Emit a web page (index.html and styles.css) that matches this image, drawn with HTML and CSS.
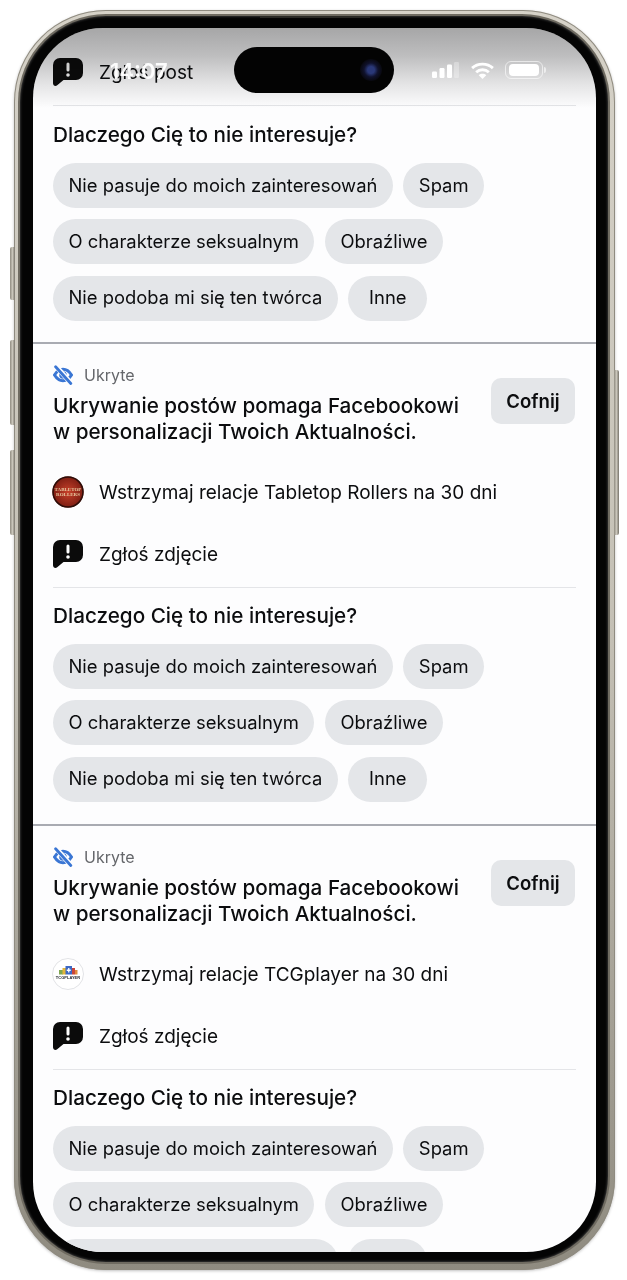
FILE: index.html
```html
<!DOCTYPE html>
<html lang="pl">
<head>
    <meta charset="UTF-8">
    <meta name="viewport" content="width=device-width, initial-scale=1.0">
    <title>Ukryte posty</title>
    <link rel="stylesheet" href="styles.css">
</head>
<body>

<svg class="defs" width="0" height="0" aria-hidden="true">
    <symbol id="report" viewBox="0 0 30 28">
        <path fill="#0b0b0b" d="M7 0h16a7 7 0 0 1 7 7v8a7 7 0 0 1-7 7H10.500l-6.300 5.300C2.400 28.700 0 27.600 0 25.300V7a7 7 0 0 1 7-7z"/>
        <rect x="13.500" y="4.500" width="3" height="9" rx="1.500" fill="#fff"/>
        <circle cx="15" cy="17" r="1.800" fill="#fff"/>
    </symbol>
    <symbol id="eye-off" viewBox="0 0 20 20">
        <path fill="none" stroke="#3a76d4" stroke-width="3" d="M1.500 10C4 6 6.800 4.300 10 4.300S16 6 18.500 10C16 14 13.200 15.700 10 15.700S4 14 1.500 10z"/>
        <circle cx="10" cy="10" r="3.800" fill="#3a76d4"/>
        <path stroke="#fdfdfe" stroke-width="5" stroke-linecap="round" d="M4 2.400 17.200 17.400"/>
        <path stroke="#3a76d4" stroke-width="2.800" stroke-linecap="round" d="M2.600 1.800 17.800 18.500"/>
    </symbol>
</svg>

<div class="phone">
    <span class="side-btn mute"></span>
    <span class="side-btn vol-up"></span>
    <span class="side-btn vol-down"></span>
    <span class="side-btn power"></span>

    <div class="bezel">
        <span class="speaker"></span>
        <div class="screen">

            <div class="top-fade"></div>

            <div class="status-bar">
                <span class="time">14:07</span>
                <div class="island"><span class="camera"></span></div>
                <div class="status-icons">
                    <svg class="signal" width="27" height="16" viewBox="0 0 27 16">
                        <rect x="0" y="9.500" width="5" height="6.500" rx="1.200" fill="#fff"/>
                        <rect x="7.500" y="6" width="5" height="10" rx="1.200" fill="#fff"/>
                        <rect x="15" y="2.500" width="5" height="13.500" rx="1.200" fill="#fff"/>
                        <rect x="22" y="0" width="5" height="16" rx="1.200" fill="#fff" opacity="0.3"/>
                    </svg>
                    <svg class="wifi" width="25" height="17" viewBox="0 0 25 18">
                        <path fill="none" stroke="#fff" stroke-width="3" d="M1.500 6.500C7.500 .8 17.500 .8 23.500 6.500"/>
                        <path fill="none" stroke="#fff" stroke-width="3" d="M5.800 10.800C9.500 7.300 15.500 7.300 19.200 10.800"/>
                        <path fill="#fff" d="M12.500 18 8.500 14C10.800 12 14.200 12 16.500 14z"/>
                    </svg>
                    <div class="battery"><span class="battery-level"></span></div>
                    <span class="battery-cap"></span>
                </div>
            </div>

            <div class="feed">
                <div class="action">
                    <svg class="report-icon"><use href="#report"/></svg>
                    <span>Zgłoś post</span>
                </div>
                <div class="reasons first">
                    <h2>Dlaczego Cię to nie interesuje?</h2>
                    <div class="chips">
                        <span class="chip">Nie pasuje do moich zainteresowań</span>
                        <span class="chip">Spam</span>
                        <span class="chip">O charakterze seksualnym</span>
                        <span class="chip">Obraźliwe</span>
                        <span class="chip">Nie podoba mi się ten twórca</span>
                        <span class="chip">Inne</span>
                    </div>
                </div>

                <section class="card">
                    <div class="hidden-head">
                        <div class="hidden-text">
                            <div class="hidden-label">
                                <svg class="eye-icon"><use href="#eye-off"/></svg>
                                <span>Ukryte</span>
                            </div>
                            <p>Ukrywanie postów pomaga Facebookowi<br>w personalizacji Twoich Aktualności.</p>
                        </div>
                        <button class="undo">Cofnij</button>
                    </div>
                    <div class="action">
                        <svg class="avatar" viewBox="0 0 32 32">
                            <defs>
                                <radialGradient id="tt-glow">
                                    <stop offset="0" stop-color="#c8412a"/>
                                    <stop offset="1" stop-color="#7c1d12"/>
                                </radialGradient>
                            </defs>
                            <circle cx="16" cy="16" r="15.500" fill="url(#tt-glow)"/>
                            <circle cx="16" cy="16" r="15" fill="none" stroke="#2d0d08" stroke-width="1.500"/>
                            <text x="16" y="14.500" class="logo-tt">TABLETOP</text>
                            <text x="16" y="20" class="logo-tt">ROLLERS</text>
                        </svg>
                        <span>Wstrzymaj relacje Tabletop Rollers na 30 dni</span>
                    </div>
                    <div class="action">
                        <svg class="report-icon"><use href="#report"/></svg>
                        <span>Zgłoś zdjęcie</span>
                    </div>
                    <div class="reasons">
                        <h2>Dlaczego Cię to nie interesuje?</h2>
                        <div class="chips">
                            <span class="chip">Nie pasuje do moich zainteresowań</span>
                            <span class="chip">Spam</span>
                            <span class="chip">O charakterze seksualnym</span>
                            <span class="chip">Obraźliwe</span>
                            <span class="chip">Nie podoba mi się ten twórca</span>
                            <span class="chip">Inne</span>
                        </div>
                    </div>
                </section>

                <section class="card">
                    <div class="hidden-head">
                        <div class="hidden-text">
                            <div class="hidden-label">
                                <svg class="eye-icon"><use href="#eye-off"/></svg>
                                <span>Ukryte</span>
                            </div>
                            <p>Ukrywanie postów pomaga Facebookowi<br>w personalizacji Twoich Aktualności.</p>
                        </div>
                        <button class="undo">Cofnij</button>
                    </div>
                    <div class="action">
                        <svg class="avatar" viewBox="0 0 32 32">
                            <circle cx="16" cy="16" r="15.500" fill="#fff" stroke="#e2e3e6"/>
                            <rect x="7" y="12" width="4" height="4.500" fill="#7fa650"/>
                            <rect x="10.500" y="10" width="3.500" height="6.500" fill="#e2b53a"/>
                            <rect x="13.500" y="8" width="6.500" height="8.500" fill="#3c68c4"/>
                            <path d="M16.750 10v4.500M14.750 12.250h4" stroke="#fff" stroke-width="1.300"/>
                            <rect x="20" y="10" width="3" height="6.500" fill="#c9453a"/>
                            <rect x="23" y="12" width="2.500" height="4.500" fill="#e08a3c"/>
                            <text x="16" y="21" class="logo-tcg">TCGPLAYER</text>
                        </svg>
                        <span>Wstrzymaj relacje TCGplayer na 30 dni</span>
                    </div>
                    <div class="action">
                        <svg class="report-icon"><use href="#report"/></svg>
                        <span>Zgłoś zdjęcie</span>
                    </div>
                    <div class="reasons">
                        <h2>Dlaczego Cię to nie interesuje?</h2>
                        <div class="chips">
                            <span class="chip">Nie pasuje do moich zainteresowań</span>
                            <span class="chip">Spam</span>
                            <span class="chip">O charakterze seksualnym</span>
                            <span class="chip">Obraźliwe</span>
                            <span class="chip">Nie podoba mi się ten twórca</span>
                            <span class="chip">Inne</span>
                        </div>
                    </div>
                </section>
            </div>
        </div>
    </div>
</div>

</body>
</html>
```

FILE: styles.css
```css
* {
    margin: 0;
    padding: 0;
    box-sizing: border-box;
}

html, body {
    height: 1280px;
    overflow: hidden;
}

body {
    font-family: Inter, 'Liberation Sans', sans-serif;
    background-color: #ffffff;
    color: #0c0d0f;
}

.defs {
    position: absolute;
}

/* phone frame */
.phone {
    position: relative;
    width: 601px;
    height: 1260px;
    margin: 10px 0 0 14px;
    padding: 6px 7px 8px 6px;
    border-radius: 92px;
    background: linear-gradient(#d6d2c8, #c4c0b5 50%, #8f8b80);
    box-shadow: inset 0 0 0 1px #8f8b80, 0 1px 3px rgba(0, 0, 0, 0.25);
}

.side-btn {
    position: absolute;
    width: 5px;
    background: linear-gradient(90deg, #8f8b80, #c9c5ba 50%, #77736a);
}

.mute { left: -4px; top: 237px; height: 53px; border-radius: 2px 0 0 2px; }
.vol-up { left: -4px; top: 330px; height: 85px; border-radius: 2px 0 0 2px; }
.vol-down { left: -4px; top: 440px; height: 85px; border-radius: 2px 0 0 2px; }
.power { right: -4px; top: 360px; height: 165px; border-radius: 0 2px 2px 0; }

.bezel {
    position: relative;
    height: 100%;
    padding: 12px 12px 10px 13px;
    border-radius: 86px;
    background-color: #040404;
    box-shadow: 0 0 0 2px #6f6b61, inset 0 0 3px rgba(255, 255, 255, 0.35);
}

.speaker {
    position: absolute;
    top: 0;
    left: 240px;
    width: 110px;
    height: 2px;
    background-color: #2a2925;
}

.screen {
    position: relative;
    height: 100%;
    overflow: hidden;
    border-radius: 70px;
    background-color: #fdfdfe;
}

/* status bar */
.top-fade {
    position: absolute;
    top: 0;
    left: 0;
    right: 0;
    height: 80px;
    z-index: 2;
    background: linear-gradient(#a8a8a8, #c0c0c0 35%, #e6e6e6 70%, #ffffff);
    mix-blend-mode: multiply;
}

.status-bar {
    position: absolute;
    top: 19px;
    left: 0;
    right: 0;
    height: 46px;
    z-index: 3;
    color: #ffffff;
}

.time {
    position: absolute;
    left: 77px;
    top: 11px;
    font-size: 22px;
    font-weight: 600;
    opacity: 0.95;
}

.island {
    position: absolute;
    left: 201px;
    top: 0;
    width: 160px;
    height: 46px;
    border-radius: 23px;
    background-color: #030303;
}

.camera {
    position: absolute;
    left: 126px;
    top: 12px;
    width: 22px;
    height: 22px;
    border-radius: 50%;
    background: radial-gradient(#2a3878 22%, #10122c 45%, #08080f 70%, #030303);
}

.status-icons {
    position: absolute;
    left: 399px;
    top: 14px;
    display: flex;
    align-items: center;
}

.wifi {
    margin-left: 11px;
}

.battery {
    width: 38px;
    height: 18px;
    margin-left: 10px;
    padding: 2px 3px;
    border: 1px solid rgba(255, 255, 255, 0.6);
    border-radius: 6px;
}

.battery-level {
    display: block;
    width: 100%;
    height: 100%;
    border-radius: 4px;
    background-color: #ffffff;
}

.battery-cap {
    width: 2px;
    height: 6px;
    margin-left: 1px;
    border-radius: 0 2px 2px 0;
    background-color: rgba(255, 255, 255, 0.6);
}

/* feed */
.feed {
    padding-top: 13px;
}

.action {
    display: flex;
    align-items: center;
    gap: 16px;
    height: 62px;
    padding: 0 20px;
    font-size: 19px;
}

.report-icon {
    width: 30px;
    height: 28px;
    flex-shrink: 0;
}

.avatar {
    width: 32px;
    height: 32px;
    margin: 0 -1px;
    flex-shrink: 0;
}

.logo-tt {
    font-family: 'Liberation Serif', serif;
    font-size: 5px;
    font-weight: bold;
    fill: #e8c9a0;
    text-anchor: middle;
}

.logo-tcg {
    font-family: 'Liberation Sans', sans-serif;
    font-size: 4px;
    font-weight: bold;
    fill: #23262e;
    text-anchor: middle;
}

.reasons {
    margin: 2px 20px 0;
    padding: 15px 0 22.250px;
    border-top: 1px solid #e4e5e8;
}

.reasons.first {
    padding: 16px 0 21.250px;
}

h2 {
    font-size: 20.700px;
    font-weight: 450;
    line-height: 26px;
}

.chips {
    display: flex;
    flex-wrap: wrap;
    gap: 11.400px 10.500px;
    margin-top: 15px;
    max-width: 470px;
}

.chip {
    display: flex;
    align-items: center;
    justify-content: center;
    min-width: 79px;
    height: 45px;
    padding: 0 15.500px 2px;
    border-radius: 23px;
    background-color: #e4e6e9;
    font-size: 18.400px;
}

/* hidden post card */
.card {
    border-top: 2px solid #a9abb2;
}

.hidden-head {
    display: flex;
    justify-content: space-between;
    align-items: flex-start;
    padding: 21px 21px 16px 20px;
}

.hidden-label {
    display: flex;
    align-items: center;
    gap: 11px;
    height: 20px;
    color: #65676b;
    font-size: 16px;
}

.eye-icon {
    width: 20px;
    height: 20px;
}

.hidden-text p {
    margin-top: 8px;
    font-size: 20.700px;
    font-weight: 450;
    line-height: 26px;
}

.undo {
    width: 84px;
    height: 46px;
    margin-top: 13px;
    border: none;
    border-radius: 10px;
    background-color: #e4e6e9;
    color: #0c0d0f;
    font-family: inherit;
    font-size: 18.600px;
    font-weight: 600;
}
```
